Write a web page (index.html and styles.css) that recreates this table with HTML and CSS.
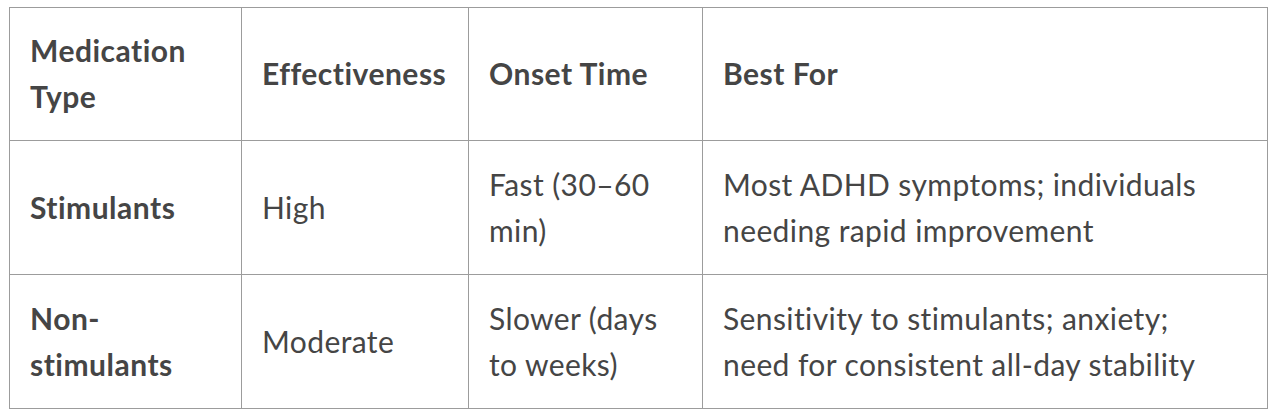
FILE: index.html
```html
<!DOCTYPE html>
<html lang="en">
<head>
<meta charset="utf-8">
<title>Medication comparison</title>
<link rel="stylesheet" href="styles.css">
</head>
<body>
<div class="wrap">
<table class="med-table">
  <colgroup>
    <col class="c1"><col class="c2"><col class="c3"><col class="c4">
  </colgroup>
  <thead>
    <tr>
      <th>Medication Type</th>
      <th>Effectiveness</th>
      <th>Onset Time</th>
      <th class="last">Best For</th>
    </tr>
  </thead>
  <tbody>
    <tr>
      <td class="name">Stimulants</td>
      <td>High</td>
      <td>Fast (30–60 min)</td>
      <td class="last">Most ADHD symptoms; individuals needing rapid improvement</td>
    </tr>
    <tr>
      <td class="name">Non-stimulants</td>
      <td>Moderate</td>
      <td>Slower (days to weeks)</td>
      <td class="last">Sensitivity to stimulants; anxiety; need for consistent all-day stability</td>
    </tr>
  </tbody>
</table>
</div>
</body>
</html>
```
FILE: styles.css
```css
html, body {
  margin: 0;
  padding: 0;
  background: #ffffff;
}
.wrap {
  padding: 7px 0 0 9px;
}
.med-table {
  border-collapse: collapse;
  table-layout: fixed;
  width: 1258px;
  font-family: Lato, "Noto Sans", sans-serif;
  font-size: 30px;
  line-height: 46px;
  color: #454545;
}
.c1 { width: 232px; }
.c2 { width: 227px; }
.c3 { width: 234px; }
.c4 { width: 565px; }
.med-table th,
.med-table td {
  border: 1px solid #9c9c9c;
  padding: 19px 20px 21px 20px;
  text-align: left;
  vertical-align: middle;
}
.med-table .last {
  padding-right: 44px;
}
.med-table th {
  font-weight: 700;
  letter-spacing: 0.5px;
  height: 92px;
}
.med-table td {
  font-weight: 400;
  letter-spacing: 0.4px;
  height: 93px;
}
.med-table td.name {
  font-weight: 700;
  letter-spacing: 0.5px;
}
```
